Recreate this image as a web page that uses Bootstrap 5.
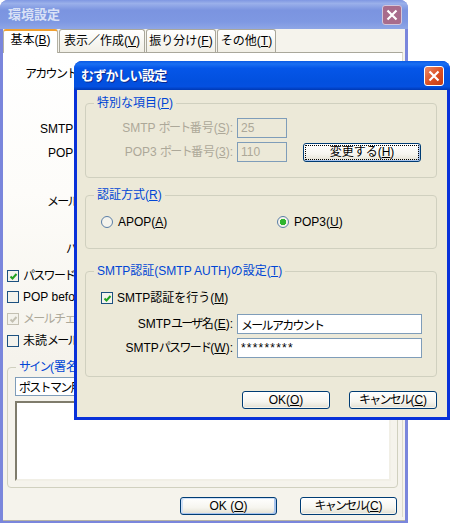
<!DOCTYPE html>
<html lang="ja">
<head>
    <meta charset="UTF-8">
    <meta name="viewport" content="width=device-width, initial-scale=1.0">
    <title>環境設定</title>
    <link rel="stylesheet" href="https://cdn.jsdelivr.net/npm/bootstrap@5.3.3/dist/css/bootstrap.min.css">
    <script src="https://cdn.jsdelivr.net/npm/bootstrap@5.3.3/dist/js/bootstrap.bundle.min.js"></script>
    <style>
        html, body { height: 100%; }
        body {
            position: relative;
            overflow: hidden;
            background: #fff;
            color: #000;
            font: 12px/16px "Liberation Sans", "Noto Sans CJK JP", sans-serif;
        }
        u { text-underline-offset: 1px; }
        /* the original font sets kana narrower than kanji */
        .kn { letter-spacing: -1.7px; }

        /* windows */
        .xp-win { position: absolute; display: flex; flex-direction: column; }
        .win-back {
            left: 0; top: 0; width: 408px; height: 523px;
            background: #7a86dc;
            border-radius: 8px 8px 0 0;
        }
        .win-front {
            left: 74px; top: 61px; width: 376px; height: 359px;
            background: #0831d9;
            border-radius: 8px 8px 0 0;
        }
        .title-bar {
            height: 29px; flex: none;
            display: flex; align-items: center; justify-content: space-between;
            font-size: 13px; font-weight: 700;
            border-radius: 8px 8px 0 0;
        }
        .win-back .title-bar {
            padding: 0 6px 0 8px; color: #d9e1f6;
            background: linear-gradient(180deg, #7f97e2 0%, #9ab0ea 12%, #7b94e0 35%, #7e98e2 75%, #8ea6e6 100%);
        }
        .win-front .title-bar {
            padding: 0 6px 0 7px; color: #fff;
            background: linear-gradient(180deg, #0a5ae4 0%, #1a6ff2 10%, #0556e8 25%, #0250df 70%, #0450e0 88%, #0039b5 100%);
            text-shadow: 1px 1px 0 #0a2a90;
        }
        .win-front .title-bar > span:first-child { letter-spacing: -.8px; }
        .close-btn {
            width: 20px; height: 20px; border: 1px solid #fff; border-radius: 3px;
            display: flex; align-items: center; justify-content: center;
        }
        .win-back .close-btn { background: #a86c8c; border-color: #d3c6da; }
        .win-front .close-btn { background: linear-gradient(135deg, #e98a68, #dc4f22 55%, #c63c14); }

        /* back window */
        .back-body { flex: 1; margin: 0 3px 3px; background: #f5f3ec; border-bottom: 1px solid #b5b2a4; position: relative; padding-bottom: 3px; }
        .xp-tabs { height: 23px; padding-left: 0; border: 0; gap: 1px; flex-wrap: nowrap; }
        .xp-tabs .nav-link {
            height: 23px; padding: 3px 0 0; border: 1px solid #a9a79b; border-bottom: 0;
            border-radius: 3px 3px 0 0; color: #000; text-align: center; white-space: nowrap;
            background: linear-gradient(180deg, #fff, #f1efe6);
            margin: 0;
        }
        .xp-tabs .nav-link.active {
            height: 24px; padding-top: 1px; position: relative; z-index: 2;
            background: #fff; border-top: 2px solid #f0a030; border-color: #f0a030 #b5b2a4 #fff;
        }
        .tab-a { width: 55px; }
        .tab-b { width: 86px; }
        .tab-c { width: 70px; }
        .tab-d { width: 59px; }
        .panel-page {
            height: 465px; margin-right: 2px; padding-top: 11px;
            background: linear-gradient(180deg, #fff 0%, #fdfcf9 30%, #f5f3ec 66%);
            border-top: 1px solid #a9a79b; border-right: 1px solid #dcdacd;
            display: flex; flex-direction: column;
        }
        .prop-rows {
            display: grid;
            grid-template-rows: 55px 24px 49px 47px 27px 21px 22px 22px 28px;
            padding-left: 4px;
        }
        .prop-label { white-space: nowrap; height: 20px; line-height: 20px; }
        .lbl-acct { margin-left: 18px; }
        .lbl-smtp { margin-left: 33px; }
        .lbl-pop { margin-left: 41px; }
        .lbl-mail { margin-left: 40px; }
        .lbl-pass { margin-left: 59px; }
        .prop-check { height: 20px; line-height: 20px; gap: 4px; white-space: nowrap; }
        .xp-group.sign-box { margin: 0 4px 0 4px; height: 129px; padding: 2px 6px 0 7px; }
        .xp-group.sign-box legend { margin-left: 1px; }
        .sign-combo { height: 19px; margin-bottom: 5px; }
        .sign-text {
            height: 80px; width: 100%;
            background: #fff;
            border: 2px solid; border-color: #7f7c6c #f1efe6 #f1efe6 #7f7c6c;
        }
        .back-btns { margin-top: 9px; padding-right: 5px; gap: 23px; justify-content: flex-end; }

        /* group boxes */
        .xp-group {
            border: 1px solid #d0d0bf; border-radius: 4px; min-width: 0; margin: 0;
        }
        .xp-group legend {
            float: none; width: auto; margin: 0 0 0 8px; padding: 0 3px;
            font-size: 12px; line-height: 16px; color: #0046d5; white-space: nowrap;
        }

        /* controls */
        .form-control.xp-input {
            border: 1px solid #7f9db9; border-radius: 0; padding: 0 3px; min-height: 0;
            font-size: 12px; line-height: 16px; color: #000; background: #fff; box-shadow: none;
        }
        .form-control.xp-input:disabled { color: #aca899; background: #ece9d8; }
        .form-control.xp-input.kn { letter-spacing: -1.7px; }
        .form-control.xp-input.pass-input { letter-spacing: 1.2px; }
        .btn.xp-btn {
            height: 18px; padding: 0; font-size: 12px; line-height: 15px; color: #000;
            border: 1px solid #003c74; border-radius: 3px;
            background: linear-gradient(180deg, #fff 0%, #f6f5ef 60%, #e3e0d2 100%);
            box-shadow: inset 0 0 0 1px rgba(255, 255, 255, .6);
        }
        .btn.xp-default { box-shadow: inset -2px -1px 0 #a8c4ee, inset 2px 1px 0 #cfe0f7; }
        .btn.xp-focus { outline: 1px dotted #000; outline-offset: -3px; box-shadow: inset -2px -1px 0 #a8c4ee; }
        .form-check-input.xp-check, .form-check-input.xp-radio {
            margin: 0; flex: none; float: none;
            border: 1px solid #1c5180; box-shadow: none;
            background-color: #f4f3ec; background-size: 9px 9px; background-position: center;
        }
        .form-check-input.xp-check { border-radius: 0; width: 12px; height: 12px; }
        .form-check-input.xp-check:checked {
            background-color: #f4f3ec;
            background-image: url("data:image/svg+xml,%3Csvg xmlns='http://www.w3.org/2000/svg' viewBox='0 0 9 9'%3E%3Cpath d='M1.5 4.5l2 2 4-4.5' fill='none' stroke='%2321a121' stroke-width='2'/%3E%3C/svg%3E");
        }
        .form-check-input.xp-check:disabled { opacity: 1; border-color: #c3c0b2; }
        .form-check-input.xp-check:disabled:checked {
            background-image: url("data:image/svg+xml,%3Csvg xmlns='http://www.w3.org/2000/svg' viewBox='0 0 9 9'%3E%3Cpath d='M1.5 4.5l2 2 4-4.5' fill='none' stroke='%23c3c0b2' stroke-width='2'/%3E%3C/svg%3E");
        }
        .form-check-input.xp-radio { width: 12px; height: 12px; border-color: #5a7ea6; }
        .form-check-input.xp-radio:checked {
            background-color: #f4f3ec; background-image: radial-gradient(circle, #2fb52f 0 3px, transparent 3.4px); background-size: auto;
        }
        .is-off { color: #aca899; }

        /* dialog */
        .dlg-body { flex: 1; margin: 0 3px 3px; background: #ece9d8; padding: 5px 10px 0 8px; }
        .box-special { height: 83px; }
        .xp-group.box-auth { height: 62px; margin-top: 9px; }
        .xp-group.box-smtp { height: 114px; margin-top: 14px; }
        .port-row { height: 20px; }
        .first-port { margin-top: 7px; }
        .next-row { margin-top: 4px; }
        .smtp-user { margin-top: 8px; }
        .opt-row { margin-top: 11px; }
        .opt-left { margin-left: 15px; }
        .opt-apop { width: 176px; gap: 5px; }
        .opt-pop3 { gap: 5px; }
        .smtp-check { gap: 4px; margin-top: 11px; }
        .field-label { width: 147px; text-align: right; white-space: nowrap; }
        .port-input { width: 50px; height: 20px; margin-left: 4px; }
        .wide-input { width: 185px; height: 20px; margin-left: 4px; }
        .change-btn { width: 118px; margin-left: 16px; margin-top: 1px; height: 19px !important; }
        .dlg-btns { margin-top: 14px; gap: 19px; justify-content: flex-end; }
        .w-ok { width: 88px; }
        .w-big { width: 97px; }
    </style>
</head>
<body>

    <!-- 環境設定 -->
    <div class="xp-win win-back">
        <div class="title-bar">
            <span>環境設定</span>
            <span class="close-btn">
                <svg width="12" height="12" viewBox="0 0 12 12"><path d="M1.5 1.5l9 9M10.5 1.5l-9 9" stroke="#fff" stroke-width="2.2"/></svg>
            </span>
        </div>
        <div class="back-body">
            <ul class="nav nav-tabs xp-tabs">
                <li class="nav-item"><a class="nav-link active tab-a">基本(<u>B</u>)</a></li>
                <li class="nav-item"><a class="nav-link tab-b">表示／作成(<u>V</u>)</a></li>
                <li class="nav-item"><a class="nav-link tab-c">振り分け(<u>F</u>)</a></li>
                <li class="nav-item"><a class="nav-link tab-d">その他(<u>T</u>)</a></li>
            </ul>
            <div class="panel-page">
                <div class="prop-rows">
                    <div class="prop-label lbl-acct"><span class="kn">アカウント</span></div>
                    <div class="prop-label lbl-smtp">SMTP</div>
                    <div class="prop-label lbl-pop">POP</div>
                    <div class="prop-label lbl-mail"><span class="kn">メール</span></div>
                    <div class="prop-label lbl-pass">パ</div>
                    <div class="d-flex align-items-center prop-check"><input class="form-check-input xp-check" type="checkbox" checked><span class="kn">パスワード</span></div>
                    <div class="d-flex align-items-center prop-check"><input class="form-check-input xp-check" type="checkbox"><span>POP before</span></div>
                    <div class="d-flex align-items-center prop-check is-off"><input class="form-check-input xp-check" type="checkbox" checked disabled><span class="kn">メールチェ</span></div>
                    <div class="d-flex align-items-center prop-check"><input class="form-check-input xp-check" type="checkbox"><span>未読<span class="kn">メール</span></span></div>
                </div>
                <fieldset class="xp-group sign-box">
                    <legend><span class="kn">サイン</span>(署名)</legend>
                    <input class="form-control xp-input sign-combo kn" type="text" value="ポストマン用">
                    <div class="sign-text"></div>
                </fieldset>
                <div class="d-flex back-btns">
                    <button class="btn xp-btn xp-default w-big" type="button">OK (<u>O</u>)</button>
                    <button class="btn xp-btn w-big" type="button"><span class="kn">キャンセル</span>(<u>C</u>)</button>
                </div>
            </div>
        </div>
    </div>

    <!-- むずかしい設定 -->
    <div class="xp-win win-front">
        <div class="title-bar">
            <span>むずかしい設定</span>
            <span class="close-btn">
                <svg width="12" height="12" viewBox="0 0 12 12"><path d="M1.5 1.5l9 9M10.5 1.5l-9 9" stroke="#fff" stroke-width="2.2"/></svg>
            </span>
        </div>
        <div class="dlg-body">
            <fieldset class="xp-group box-special">
                <legend>特別な項目(<u>P</u>)</legend>
                <div class="d-flex align-items-center port-row first-port is-off">
                    <span class="field-label">SMTP <span class="kn">ポート</span>番号(<u>S</u>):</span>
                    <input class="form-control xp-input port-input" type="text" value="25" disabled>
                </div>
                <div class="d-flex align-items-center port-row next-row is-off">
                    <span class="field-label">POP3 <span class="kn">ポート</span>番号(<u>3</u>):</span>
                    <input class="form-control xp-input port-input" type="text" value="110" disabled>
                    <button class="btn xp-btn xp-focus change-btn" type="button">変更する(<u>H</u>)</button>
                </div>
            </fieldset>
            <fieldset class="xp-group box-auth">
                <legend>認証方式(<u>R</u>)</legend>
                <div class="d-flex align-items-center opt-row">
                    <div class="d-flex align-items-center opt-left opt-apop">
                        <input class="form-check-input xp-radio" type="radio" name="auth">
                        <span>APOP(<u>A</u>)</span>
                    </div>
                    <div class="d-flex align-items-center opt-pop3">
                        <input class="form-check-input xp-radio" type="radio" name="auth" checked>
                        <span>POP3(<u>U</u>)</span>
                    </div>
                </div>
            </fieldset>
            <fieldset class="xp-group box-smtp">
                <legend>SMTP認証(SMTP AUTH)の設定(<u>T</u>)</legend>
                <div class="d-flex align-items-center opt-left smtp-check">
                    <input class="form-check-input xp-check" type="checkbox" checked>
                    <span>SMTP認証を行う(<u>M</u>)</span>
                </div>
                <div class="d-flex align-items-center port-row smtp-user">
                    <span class="field-label">SMTP<span class="kn">ユーザ</span>名(<u>E</u>):</span>
                    <input class="form-control xp-input wide-input kn" type="text" value="メールアカウント">
                </div>
                <div class="d-flex align-items-center port-row next-row">
                    <span class="field-label">SMTP<span class="kn">パスワード</span>(<u>W</u>):</span>
                    <input class="form-control xp-input wide-input pass-input" type="text" value="*********">
                </div>
            </fieldset>
            <div class="d-flex dlg-btns">
                <button class="btn xp-btn w-ok" type="button">OK(<u>O</u>)</button>
                <button class="btn xp-btn w-ok" type="button"><span class="kn">キャンセル</span>(<u>C</u>)</button>
            </div>
        </div>
    </div>

</body>
</html>
